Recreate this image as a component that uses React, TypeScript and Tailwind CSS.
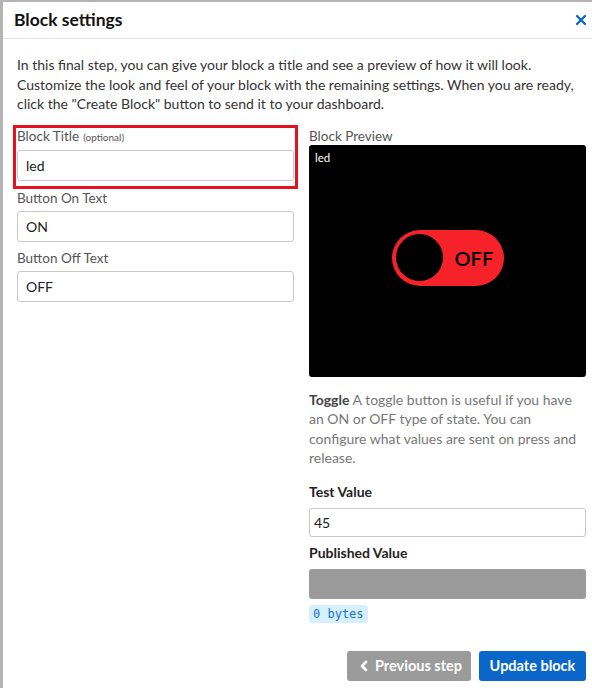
import { X, ChevronLeft } from 'lucide-react'

const font = { fontFamily: 'Lato, "Liberation Sans", sans-serif' }

function Field({ label, hint, value }: { label: string; hint?: string; value: string }) {
  return (
    <div className="flex flex-col">
      <label className="text-[13.5px] leading-[17px] text-[#555]">
        {label}
        {hint && <span className="ml-1 text-[10px] text-[#555]">{hint}</span>}
      </label>
      <div className="mt-[4px] h-[31px] rounded-[3px] border border-[#c8c8c8] bg-white px-[8px] text-[14px] leading-[29px] text-[#222]">
        {value}
      </div>
    </div>
  )
}

export default function App() {
  return (
    <div className="min-h-[688px] bg-[#b4b4b4] pl-[3px] pt-[2px]" style={font}>
      <div className="min-h-[686px] bg-white">
        {/* Header */}
        <div className="flex h-[37px] items-center justify-between border-b border-[#e5e5e5] pl-[11px] pr-[3px]">
          <h1 className="text-[17.5px] font-bold text-[#111]">Block settings</h1>
          <X className="h-[16px] w-[16px] text-[#0a66c8]" strokeWidth={3.5} />
        </div>

        <p className="pl-[14px] pr-[3px] pt-[16px] text-[14px] leading-[19.5px] text-[#333]">
          In this final step, you can give your block a title and see a preview of how it will look. Customize the look
          and feel of your block with the remaining settings. When you are ready, click the "Create Block" button to send
          it to your dashboard.
        </p>

        <div className="mt-[11px] flex gap-[15px] pl-[14px] pr-[3px]">
          {/* Left column */}
          <div className="flex w-[277px] shrink-0 flex-col">
            <div className="-mx-[4px] border-[3px] border-[#e3131f] px-[1px] pb-[5px]">
              <Field label="Block Title" hint="(optional)" value="led" />
            </div>
            <div className="mt-[1px]">
              <Field label="Button On Text" value="ON" />
            </div>
            <div className="mt-[8px]">
              <Field label="Button Off Text" value="OFF" />
            </div>
          </div>

          {/* Right column */}
          <div className="flex w-[277px] shrink-0 flex-col">
            <div className="mt-[2px] text-[13.5px] leading-[18px] text-[#555]">Block Preview</div>
            <div className="flex h-[232px] flex-col rounded-[3px] bg-black p-[6px]">
              <span className="text-[11.5px] leading-[14px] text-white">led</span>
              <div className="flex flex-1 items-center justify-center pb-[20px]">
                <div className="flex h-[56px] w-[112px] items-center rounded-full bg-[#f5222a] pl-[4px]">
                  <div className="h-[47px] w-[47px] rounded-full bg-black" />
                  <span className="ml-[12px] text-[20px] font-semibold text-black">OFF</span>
                </div>
              </div>
            </div>

            <p className="mt-[13px] text-[14px] leading-[19.5px] text-[#777]">
              <b className="font-bold text-[#444]">Toggle</b> A toggle button is useful if you have an ON or OFF type of
              state. You can configure what values are sent on press and release.
            </p>

            <div className="mt-[15px] text-[14px] font-bold leading-[18px] text-[#222]">Test Value</div>
            <div className="mt-[7px] h-[29px] rounded-[3px] border border-[#c8c8c8] px-[4px] text-[14px] leading-[27px] text-[#222]">
              45
            </div>
            <div className="mt-[7px] text-[14px] font-bold leading-[18px] text-[#222]">Published Value</div>
            <div className="mt-[7px] h-[30px] rounded-[3px] bg-[#9b9b9b]" />
            <div
              className="mt-[6px] self-start rounded-[3px] bg-[#d5f1fd] px-[4px] text-[12px] leading-[18px] text-[#1a73c8]"
              style={{ fontFamily: '"DejaVu Sans Mono", monospace' }}
            >
              0 bytes
            </div>

            <div className="mt-[28px] flex justify-end gap-[8px]">
              <button className="flex h-[30px] w-[124px] items-center justify-center gap-[3px] rounded-[3px] bg-[#9b9b9b] text-[14.5px] font-bold text-white">
                <ChevronLeft className="h-[16px] w-[16px]" strokeWidth={4} />
                Previous step
              </button>
              <button className="h-[30px] w-[107px] rounded-[3px] bg-[#0a66c8] text-[14.5px] font-bold text-white">
                Update block
              </button>
            </div>
          </div>
        </div>
      </div>
    </div>
  )
}
